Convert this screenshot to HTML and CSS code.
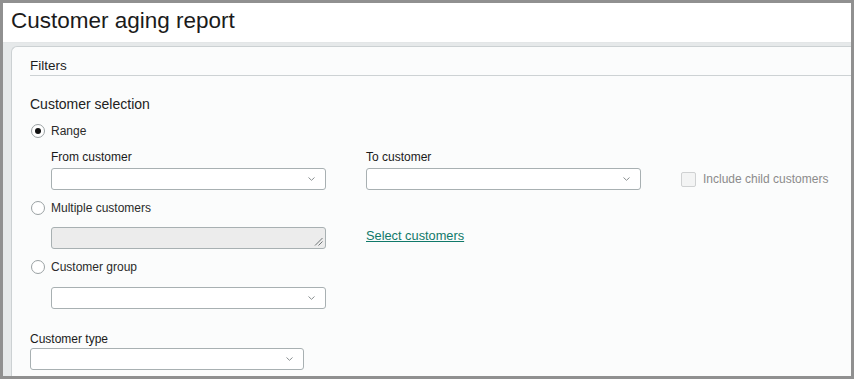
FILE: index.html
```html
<!DOCTYPE html>
<html>
<head>
<meta charset="utf-8">
<link rel="stylesheet" href="styles.css">
</head>
<body>
<div class="frame">
  <header class="page-head">
    <h1 class="title">Customer aging report</h1>
  </header>
  <div class="content">
    <section class="panel">
      <div class="panel-head">Filters</div>
      <div class="panel-body">
        <div class="section-title">Customer selection</div>

        <div class="radio-row first">
          <span class="radio checked"></span><span class="radio-label">Range</span>
        </div>
        <div class="indent range-grid">
          <div class="field">
            <div class="field-label">From customer</div>
            <div class="select"><svg class="chev" viewBox="0 0 7 4" width="7" height="4"><path d="M0.5 0.5 L3.5 3.3 L6.5 0.5" fill="none" stroke="#8a8f91" stroke-width="1"/></svg></div>
          </div>
          <div class="field">
            <div class="field-label">To customer</div>
            <div class="select"><svg class="chev" viewBox="0 0 7 4" width="7" height="4"><path d="M0.5 0.5 L3.5 3.3 L6.5 0.5" fill="none" stroke="#8a8f91" stroke-width="1"/></svg></div>
          </div>
          <label class="check">
            <span class="checkbox"></span><span class="check-label">Include child customers</span>
          </label>
        </div>

        <div class="radio-row">
          <span class="radio"></span><span class="radio-label">Multiple customers</span>
        </div>
        <div class="indent multi-row">
          <div class="textarea">
            <svg class="grip" viewBox="0 0 9 9" width="9" height="9"><path d="M8.5 1 L1 8.5 M8.5 4.5 L4.5 8.5" stroke="#6f7577" stroke-width="1" fill="none"/></svg>
          </div>
          <a class="link" href="#">Select customers</a>
        </div>

        <div class="radio-row">
          <span class="radio"></span><span class="radio-label">Customer group</span>
        </div>
        <div class="indent group-row">
          <div class="select"><svg class="chev" viewBox="0 0 7 4" width="7" height="4"><path d="M0.5 0.5 L3.5 3.3 L6.5 0.5" fill="none" stroke="#8a8f91" stroke-width="1"/></svg></div>
        </div>

        <div class="type-field">
          <div class="field-label">Customer type</div>
          <div class="select narrow"><svg class="chev" viewBox="0 0 7 4" width="7" height="4"><path d="M0.5 0.5 L3.5 3.3 L6.5 0.5" fill="none" stroke="#8a8f91" stroke-width="1"/></svg></div>
        </div>
      </div>
    </section>
  </div>
</div>
</body>
</html>
```

FILE: styles.css
```css
* { box-sizing: border-box; }
html, body { margin: 0; padding: 0; }
body {
  font-family: "Liberation Sans", Arial, sans-serif;
  color: #1f1f1f;
  background: #909090;
}
.frame {
  width: 854px;
  height: 379px;
  border: 3px solid #909090;
  background: #eef0f0;
  overflow: hidden;
  display: flex;
  flex-direction: column;
}
.page-head {
  height: 39px;
  background: #ffffff;
  padding-left: 8px;
  flex: none;
}
.title {
  margin: 0;
  font-weight: normal;
  font-size: 22.5px;
  line-height: 39px;
  color: #1b1b1b;
  position: relative;
  top: -2px;
}
.content {
  flex: 1;
  padding: 3px 0 0 8px;
  background: #e6e9ea;
  border-top: 1px solid #e3e6e7;
}
.panel {
  height: 100%;
  background: #fbfcfc;
  border: 1px solid #ccd1d3;
  border-right: none;
  border-bottom: none;
  border-radius: 6px 0 0 0;
  padding-left: 18px;
}
.panel-head {
  font-size: 13.5px;
  line-height: 17px;
  padding: 10px 0 1px;
  border-bottom: 1px solid #cdd2d4;
  color: #1e1e1e;
}
.panel-body {
  display: flex;
  flex-direction: column;
  align-items: flex-start;
}
.section-title {
  font-size: 14px;
  line-height: 16px;
  margin-top: 20px;
  color: #222;
}
.radio-row {
  display: flex;
  align-items: center;
  height: 16px;
  margin-top: 10px;
  padding-left: 1px;
}
.radio-row.first { margin-top: 11px; }
.radio {
  width: 14px;
  height: 14px;
  border-radius: 50%;
  border: 1px solid #9aa1a3;
  background: #fff;
  display: flex;
  align-items: center;
  justify-content: center;
}
.radio.checked::after {
  content: "";
  width: 6px;
  height: 6px;
  border-radius: 50%;
  background: #111;
}
.radio-label {
  font-size: 12px;
  margin-left: 6px;
  color: #2a2a2a;
}
.indent { margin-left: 21px; }
.range-grid {
  display: flex;
  align-items: flex-end;
  gap: 40px;
  margin-top: 11px;
}
.field { display: flex; flex-direction: column; }
.field-label {
  font-size: 12px;
  line-height: 14px;
  color: #1a1a1a;
  margin-bottom: 4px;
}
.select {
  width: 275px;
  height: 22px;
  border: 1px solid #a8b0b2;
  border-radius: 3px;
  background: #fff;
  display: flex;
  align-items: center;
  justify-content: flex-end;
  padding-right: 10px;
}
.select.narrow { width: 274px; }
.chev { display: block; }
.check {
  display: flex;
  align-items: center;
  height: 22px;
}
.checkbox {
  width: 15px;
  height: 15px;
  border: 1px solid #cfd1d2;
  border-radius: 2px;
  background: #f3f4f4;
}
.check-label {
  font-size: 12px;
  color: #8b8b8b;
  margin-left: 7px;
}
.multi-row {
  display: flex;
  align-items: center;
  gap: 40px;
  margin-top: 11px;
}
.textarea {
  width: 275px;
  height: 22px;
  border: 1px solid #a8b0b2;
  border-radius: 3px;
  background: #ececec;
  display: flex;
  align-items: flex-end;
  justify-content: flex-end;
  padding: 0 2px 2px 0;
}
.grip { display: block; }
.link {
  font-size: 12.8px;
  color: #10796a;
  text-decoration: underline;
  position: relative;
  top: -3px;
}
.group-row { margin-top: 12px; }
.type-field {
  margin-top: 23px;
  display: flex;
  flex-direction: column;
}
.type-field .field-label { margin-bottom: 2px; }
```
